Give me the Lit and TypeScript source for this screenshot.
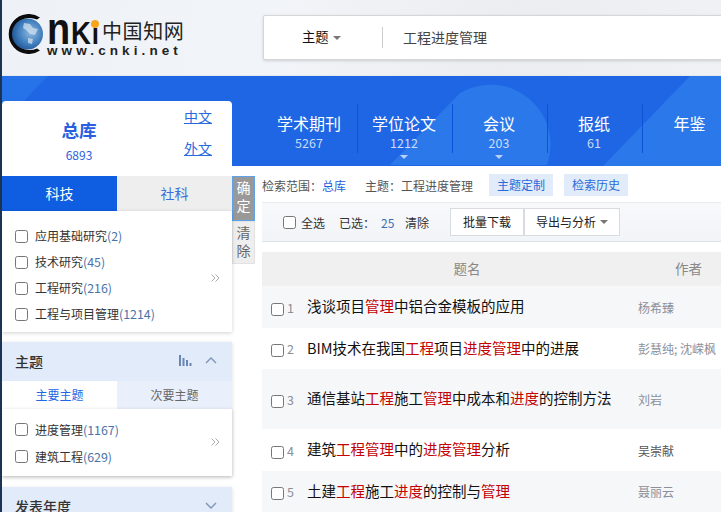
import { LitElement, html, css, svg } from "lit";
import { customElement } from "lit/decorators.js";

const FONT = css`"Noto Sans CJK SC", "Noto Sans", sans-serif`;

const ROWS = [
  { h: 42, title: "浅谈项目管理中铝合金模板的应用", author: "杨希臻" },
  { h: 41, title: "BIM技术在我国工程项目进度管理中的进展", author: "彭慧纯; 沈嵘枫" },
  { h: 60, title: "通信基站工程施工管理中成本和进度的控制方法", author: "刘岩" },
  { h: 42, title: "建筑工程管理中的进度管理分析", author: "吴崇献", plain: true },
  { h: 41, title: "土建工程施工进度的控制与管理", author: "聂丽云" },
];

const TABS = [
  { name: "学术期刊", n: "5267" },
  { name: "学位论文", n: "1212", caret: true },
  { name: "会议", n: "203", caret: true },
  { name: "报纸", n: "61" },
  { name: "年鉴", n: "" },
];

const SUBJECTS = ["应用基础研究(2)", "技术研究(45)", "工程研究(216)", "工程与项目管理(1214)"];
const TOPICS = ["进度管理(1167)", "建筑工程(629)"];

@customElement("app-root")
export class AppRoot extends LitElement {
  static styles = css`
    :host {
      display: block;
      width: 721px;
      height: 512px;
      overflow: hidden;
      box-sizing: border-box;
      border-left: 2px solid #1b3454;
      background: #fff;
      font-family: ${FONT};
      color: #333;
    }
    * { box-sizing: border-box; }
    input[type="checkbox"] { width: 13px; height: 13px; margin: 0; flex: none; }

    .top {
      height: 76px;
      display: flex;
      align-items: flex-start;
      border-bottom: 1px solid #e6e8ea;
      background: linear-gradient(100deg, #eef2f7 0%, #f1f4f8 38%, #ecedf0 70%, #eff1f4 100%);
      overflow: hidden;
    }
    .logo { position: relative; width: 261px; height: 75px; flex: none; }
    .logo svg { position: absolute; left: 4px; top: 14px; }
    .logo-en {
      position: absolute; left: 45px; top: 17px;
      display: flex; align-items: baseline;
      font: 900 44px/24px "Liberation Sans", sans-serif;
      color: #111;
      transform: scaleX(0.86); transform-origin: left center;
    }
    .logo-en .k { font-size: 32px; line-height: 24px; margin-left: 1px; }
    .logo-en .i { font-size: 30px; line-height: 24px; margin-left: 1px; }
    .logo-dot {
      position: absolute; left: 89px; top: 20px; width: 8px; height: 8px;
      border-radius: 50%; background: #f8a51b;
    }
    .logo-cn {
      position: absolute; left: 100px; top: 18px;
      font-size: 20px; line-height: 26px; letter-spacing: 0.6px; color: #222;
    }
    .logo-url {
      position: absolute; left: 45px; top: 44px;
      font: 700 13.5px/14px "Liberation Sans", sans-serif;
      letter-spacing: 4.1px; color: #222; white-space: nowrap;
    }
    .search {
      margin-top: 15px;
      flex: 1;
      margin-right: -10px;
      height: 45px;
      display: flex;
      align-items: center;
      background: #fff;
      border: 1px solid #d6d6d6;
      box-shadow: 0 1px 3px rgba(0, 0, 0, 0.15);
      border-radius: 2px;
    }
    .field { width: 119px; height: 21px; display: flex; align-items: center; padding-left: 38px; gap: 4px; border-right: 1px solid #ccc; font-size: 13.3px; color: #111; flex: none; }
    .field span:first-child { position: relative; top: -1px; }
    .caret { width: 0; height: 0; border-left: 4px solid transparent; border-right: 4px solid transparent; border-top: 4px solid #777; }
    .query { padding: 0 0 2px 20px; font-size: 14px; color: #444; }

    .band {
      height: 90px;
      position: relative;
      background: #1e66e4;
      padding: 28px 0 0 261px;
      display: flex;
      overflow: hidden;
    }
    .band-art { position: absolute; left: 0; top: 0; }
    .tab {
      position: relative;
      width: 95px;
      height: 49px;
      flex: none;
      text-align: center;
      color: #fff;
      font-size: 16px;
      line-height: 24px;
      border-right: 1px solid #0e52d6;
      padding: 7px 2px 0 0;
    }
    .tab:last-child { border-right: 0; }
    .tab small { display: block; font-size: 12.5px; line-height: 16px; margin-top: 0; color: #c9dcf9; }
    .tab i {
      position: absolute; left: 42px; top: 51px; width: 0; height: 0;
      border-left: 4px solid transparent; border-right: 4px solid transparent;
      border-top: 4px solid #b9d0f7;
    }

    .main { display: flex; align-items: flex-start; }
    .side { width: 230px; flex: none; margin-top: -65px; position: relative; }
    .total {
      height: 75px; background: #fff; border-radius: 4px 4px 0 0;
      display: flex; color: #2a5fe0;
    }
    .total-main { width: 154px; text-align: center; padding-top: 16px; }
    .total-main b { display: block; font-size: 17.6px; line-height: 26px; font-weight: 700; }
    .total-main span { display: block; font-size: 12px; line-height: 18px; margin-top: 3px; }
    .langs { width: 76px; padding: 0 0 0 28px; font-size: 14px; line-height: 32px; margin-top: -1px; }
    .langs a { display: block; color: #2a6ae0; text-decoration: underline; }

    .switch { display: flex; height: 35px; font-size: 14px; line-height: 35px; text-align: center; }
    .switch div { flex: 1; background: #eee; color: #3a6fdc; position: relative; }
    .switch .on { background: #0f5de1; color: #fff; }
    .switch .on::after {
      content: ""; position: absolute; left: 50%; margin-left: -5px; top: 35px; width: 0; height: 0;
      border-left: 5px solid transparent; border-right: 5px solid transparent; border-top: 4px solid #0f5de1;
    }
    .list {
      position: relative;
      background: #fff;
      font-size: 12px;
      color: #333;
      padding: 12px 0 4px 13px;
      box-shadow: 0 1px 4px rgba(0, 0, 0, 0.18);
    }
    .list.first { height: 121px; }
    .list.second { height: 67px; padding-top: 7px; }
    .item { display: flex; align-items: center; gap: 7px; height: 26px; }
    .second .item { height: 27px; }
    .item em { font-style: normal; color: #4a74a8; font-size: 12.4px; }
    .more { position: absolute; right: 12px; top: 50%; display: block; }
    .first .more { margin-top: 2px; }
    .second .more { margin-top: -5px; }
    .panel { margin-top: 10px; box-shadow: 0 1px 4px rgba(0, 0, 0, 0.14); }
    .panel + .panel { margin-top: 11px; }
    .panel-head {
      height: 39px; background: #e2ebfa; display: flex; align-items: center; padding: 0 15px 2px 13px;
      font-size: 14px; font-weight: 500; color: #333; gap: 0;
    }
    .panel-head span { flex: 1; }
    .panel-head svg { display: block; }
    .bars { margin-right: 13px; }
    .sub { display: flex; height: 28px; font-size: 12px; line-height: 28px; text-align: center; }
    .sub div { flex: 1; background: #e9f0fb; color: #666; }
    .sub .on { background: #fff; color: #1c68e6; }

    .actions { width: 23px; flex: none; margin-top: 10px; font-size: 14px; line-height: 18px; text-align: center; }
    .ok { height: 45px; background: #999; color: #fff; border: 1px solid #5fa3e6; padding-top: 1px; }
    .clear { height: 43px; background: #eee; color: #666; border: 1px solid #e2e2e2; padding-top: 1px; }

    .content { flex: 1; min-width: 0; margin-left: 7px; }
    .scope { height: 36px; display: flex; align-items: center; font-size: 12px; color: #555; padding-top: 2px; }
    .scope b { font-weight: 400; color: #1c5fdc; }
    .scope .q { margin-left: 19px; width: 124px; color: #555; }
    .chip { width: 64px; height: 22px; line-height: 22px; text-align: center; background: #e2ebfa; color: #2a6ad8; margin-right: 11px; }
    .tools {
      height: 40px; display: flex; align-items: center; font-size: 12px; color: #333;
      background: linear-gradient(#f8f9fb, #f1f4f8); border-top: 1px solid #e8ecf1; border-bottom: 1px solid #dde2e8;
      padding-left: 21px;
    }
    .tools .all { margin-left: 5px; }
    .tools .sel { margin-left: 14px; }
    .tools .num { margin-left: 3px; color: #3a6db5; width: 27px; text-align: left; padding-left: 3px; }
    .btn {
      height: 28px; line-height: 26px; padding: 0; text-align: center; background: #fff; border: 1px solid #d8dce0;
      display: flex; align-items: center; justify-content: center; gap: 4px; color: #222;
    }
    .b1 { width: 74px; margin-left: 21px; }
    .b2 { width: 96px; margin-left: 0; }
    .thead {
      margin-top: 10px; height: 34px; background: #f0f0f0; display: grid;
      grid-template-columns: 410px 1fr; font-size: 13.5px; line-height: 32px; color: #888;
    }
    .thead .t { text-align: center; }
    .thead .a { padding-left: 3px; }
    .row {
      display: grid; grid-template-columns: 16px 20px 331px 1fr; align-items: center;
      padding-left: 9px; font-size: 14.5px; color: #111; white-space: nowrap;
    }
    .row:nth-child(odd) { background: #f6f7f9; }
    .row input { margin-top: 4px; }
    .row .tt { padding-bottom: 3px; }
    .row .n { font-size: 12.5px; color: #8a8f99; }
    .row mark { background: none; color: #c40000; }
    .row .au { font-size: 12px; color: #8b8f9a; overflow: hidden; }
    .row .au.plain { color: #555; }
  `;

  private title_(t: string) {
    return t.split(/(工程|进度|管理)/).map((p) =>
      /^(工程|进度|管理)$/.test(p) ? html`<mark>${p}</mark>` : p
    );
  }

  private chevron(up: boolean) {
    const d = up ? "M1 7 L6 2 L11 7" : "M1 2 L6 7 L11 2";
    return html`<svg width="12" height="9" viewBox="0 0 12 9"><path d=${d} fill="none" stroke="#7d93b8" stroke-width="1.4"/></svg>`;
  }

  private more() {
    return html`<svg class="more" width="9" height="8" viewBox="0 0 9 8"><path d="M0.5 0.5 L4 4 L0.5 7.5 M4.5 0.5 L8 4 L4.5 7.5" fill="none" stroke="#aaa" stroke-width="1"/></svg>`;
  }

  private art() {
    return svg`<svg class="band-art" width="719" height="90" viewBox="0 0 719 90">
      <path d="M0 0H46L0 48Z" fill="#2672e8"/>
      <path d="M388 89L458 17A60 60 0 0 1 545 89Z" fill="#2b78ea"/>
      <path d="M601 90L688 0H719V90Z" fill="#2b78ea"/>
    </svg>`;
  }

  render() {
    return html`
      <div class="top">
        <div class="logo">
          <svg width="42" height="40" viewBox="0 0 42 40">
            <defs>
              <radialGradient id="g" cx="0.6" cy="0.45" r="0.65">
                <stop offset="0" stop-color="#8fb9e0"/>
                <stop offset="0.6" stop-color="#3f7dbc"/>
                <stop offset="1" stop-color="#1d4f8f"/>
              </radialGradient>
            </defs>
            <path d="M34 3.5 A20 20 0 1 0 34 36.5 L31 34.5 A17 16 0 1 1 31 5.5 Z" fill="#0c0c0c"/>
            <circle cx="21.5" cy="20" r="15.5" fill="url(#g)"/>
            <path d="M18 9 l6 1 3 4 5 1 -3 6 -5 -1 -4 -4 -3 -2Z M22 24 l5 1 -1 5 -4 -1Z" fill="#cfe0ee" opacity=".75"/>
          </svg>
          <span class="logo-en">n<span class="k">K</span><span class="i">ı</span></span>
          <span class="logo-dot"></span>
          <span class="logo-cn">中国知网</span>
          <span class="logo-url">www.cnki.net</span>
        </div>
        <div class="search">
          <div class="field"><span>主题</span><span class="caret"></span></div>
          <div class="query">工程进度管理</div>
        </div>
      </div>

      <div class="band">
        ${this.art()}
        ${TABS.map(
          (t) => html`<div class="tab">
            ${t.name}<small>${t.n}</small>${t.caret ? html`<i></i>` : ""}
          </div>`
        )}
      </div>

      <div class="main">
        <div class="side">
          <div class="total">
            <div class="total-main"><b>总库</b><span>6893</span></div>
            <div class="langs"><a>中文</a><a>外文</a></div>
          </div>
          <div class="switch"><div class="on">科技</div><div>社科</div></div>
          <div class="list first">
            ${SUBJECTS.map((s) => this.item(s))}
            ${this.more()}
          </div>
          <div class="panel">
            <div class="panel-head">
              <span>主题</span>
              <svg class="bars" width="13" height="11" viewBox="0 0 13 11" fill="#6a86b4">
                <rect x="0" y="0" width="2" height="11"/><rect x="3.5" y="3" width="2" height="8"/>
                <rect x="7" y="5" width="2" height="6"/><rect x="10.5" y="8" width="2" height="3"/>
              </svg>
              ${this.chevron(true)}
            </div>
            <div class="sub"><div class="on">主要主题</div><div>次要主题</div></div>
            <div class="list second">
              ${TOPICS.map((s) => this.item(s))}
              ${this.more()}
            </div>
          </div>
          <div class="panel">
            <div class="panel-head"><span>发表年度</span>${this.chevron(false)}</div>
          </div>
        </div>

        <div class="actions">
          <div class="ok">确<br />定</div>
          <div class="clear">清<br />除</div>
        </div>

        <div class="content">
          <div class="scope">
            <span>检索范围：<b>总库</b></span>
            <span class="q">主题：工程进度管理</span>
            <span class="chip">主题定制</span>
            <span class="chip">检索历史</span>
          </div>
          <div class="tools">
            <input type="checkbox" />
            <span class="all">全选</span>
            <span class="sel">已选：</span>
            <span class="num">25</span>
            <span class="clr">清除</span>
            <span class="btn b1">批量下载</span>
            <span class="btn b2">导出与分析<span class="caret"></span></span>
          </div>
          <div class="thead"><div class="t">题名</div><div class="a">作者</div></div>
          <div>
            ${ROWS.map(
              (r, i) => html`<div class="row" style="height:${r.h}px">
                <input type="checkbox" />
                <span class="n">${i + 1}</span>
                <span class="tt">${this.title_(r.title)}</span>
                <span class="au ${r.plain ? "plain" : ""}">${r.author}</span>
              </div>`
            )}
          </div>
        </div>
      </div>
    `;
  }

  private item(s: string) {
    const m = s.match(/^(.*?)(\(.*\))$/)!;
    return html`<label class="item"><input type="checkbox" /><span>${m[1]}<em>${m[2]}</em></span></label>`;
  }
}
